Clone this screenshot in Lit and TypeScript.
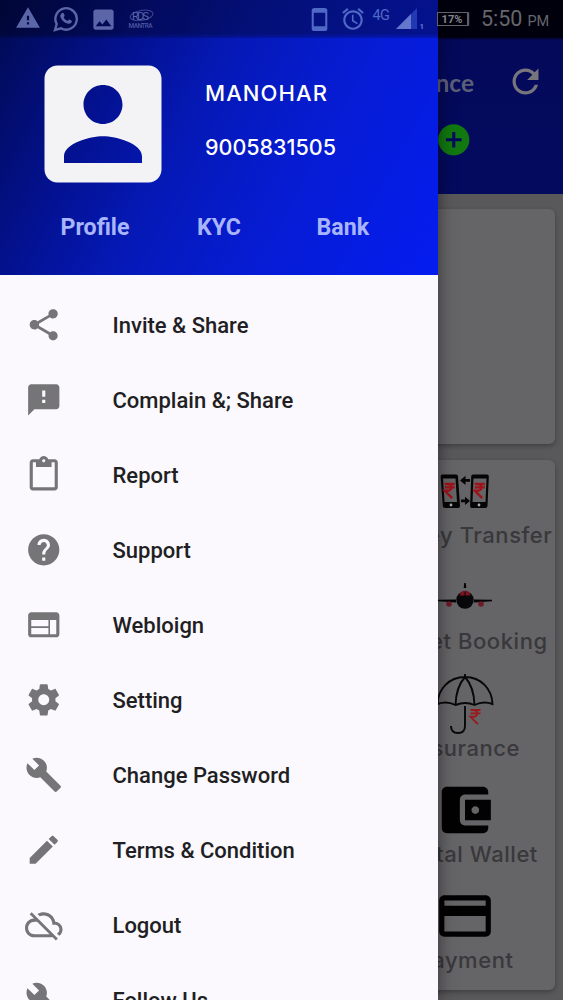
import { LitElement, html, svg, css } from "lit";
import { customElement, property } from "lit/decorators.js";

const ICONS: Record<string, string> = {
  share: "M18 16.08c-.76 0-1.44.3-1.96.77L8.91 12.7c.05-.23.09-.46.09-.7s-.04-.47-.09-.7l7.05-4.11c.54.5 1.25.81 2.04.81 1.66 0 3-1.34 3-3s-1.34-3-3-3-3 1.34-3 3c0 .24.04.47.09.7L8.04 9.81C7.5 9.31 6.79 9 6 9c-1.66 0-3 1.34-3 3s1.34 3 3 3c.79 0 1.5-.31 2.04-.81l7.12 4.16c-.05.21-.08.43-.08.65 0 1.61 1.31 2.92 2.92 2.92s2.92-1.31 2.92-2.92-1.31-2.92-2.92-2.92z",
  complain: "M20 2H4c-1.1 0-1.99.9-1.99 2L2 22l4-4h14c1.1 0 2-.9 2-2V4c0-1.1-.9-2-2-2zm-7 12h-2v-2h2v2zm0-4h-2V6h2v4z",
  report: "M19 2h-4.18C14.4.84 13.3 0 12 0c-1.3 0-2.4.84-2.82 2H5c-1.1 0-2 .9-2 2v16c0 1.1.9 2 2 2h14c1.1 0 2-.9 2-2V4c0-1.1-.9-2-2-2zm-7 0c.55 0 1 .45 1 1s-.45 1-1 1-1-.45-1-1 .45-1 1-1zm7 18H5V4h2v3h10V4h2v16z",
  help: "M12 2C6.48 2 2 6.48 2 12s4.48 10 10 10 10-4.48 10-10S17.52 2 12 2zm1 17h-2v-2h2v2zm2.07-7.75l-.9.92C13.45 12.9 13 13.5 13 15h-2v-.5c0-1.1.45-2.1 1.17-2.83l1.24-1.26c.37-.36.59-.86.59-1.41 0-1.1-.9-2-2-2s-2 .9-2 2H8c0-2.21 1.79-4 4-4s4 1.79 4 4c0 .88-.36 1.68-.93 2.25z",
  web: "M20 4H4c-1.1 0-1.99.9-1.99 2L2 18c0 1.1.9 2 2 2h16c1.1 0 2-.9 2-2V6c0-1.1-.9-2-2-2zm-5 14H4v-4h11v4zm0-5H4V9h11v4zm5 5h-4V9h4v9z",
  settings: "M19.43 12.98c.04-.32.07-.64.07-.98s-.03-.66-.07-.98l2.11-1.65c.19-.15.24-.42.12-.64l-2-3.46c-.12-.22-.39-.3-.61-.22l-2.49 1c-.52-.4-1.08-.73-1.69-.98l-.38-2.65C14.46 2.18 14.25 2 14 2h-4c-.25 0-.46.18-.49.42l-.38 2.65c-.61.25-1.17.59-1.69.98l-2.49-1c-.23-.09-.49 0-.61.22l-2 3.46c-.13.22-.07.49.12.64l2.11 1.65c-.04.32-.07.65-.07.98s.03.66.07.98l-2.11 1.65c-.19.15-.24.42-.12.64l2 3.46c.12.22.39.3.61.22l2.49-1c.52.4 1.08.73 1.69.98l.38 2.65c.03.24.24.42.49.42h4c.25 0 .46-.18.49-.42l.38-2.65c.61-.25 1.17-.59 1.69-.98l2.49 1c.23.09.49 0 .61-.22l2-3.46c.12-.22.07-.49-.12-.64l-2.11-1.65zM12 15.5c-1.93 0-3.5-1.57-3.5-3.5s1.57-3.5 3.5-3.5 3.5 1.57 3.5 3.5-1.57 3.5-3.5 3.5z",
  build: "M22.7 19l-9.1-9.1c.9-2.3.4-5-1.5-6.9-2-2-5-2.4-7.4-1.3L9 6 6 9 1.6 4.7C.4 7.1.9 10.1 2.9 12.1c1.9 1.9 4.6 2.4 6.9 1.5l9.1 9.1c.4.4 1 .4 1.4 0l2.3-2.3c.5-.4.5-1.1.1-1.4z",
  edit: "M3 17.25V21h3.75L17.81 9.94l-3.75-3.75L3 17.25zM20.71 7.04c.39-.39.39-1.02 0-1.41l-2.34-2.34c-.39-.39-1.02-.39-1.41 0l-1.83 1.83 3.75 3.75 1.83-1.83z",
  cloudOff: "M19.35 10.04C18.67 6.59 15.64 4 12 4c-1.48 0-2.85.43-4.01 1.17l1.46 1.46C10.21 6.23 11.08 6 12 6c3.04 0 5.5 2.46 5.5 5.5v.5H19c1.66 0 3 1.34 3 3 0 1.13-.64 2.11-1.56 2.62l1.45 1.45C23.16 18.16 24 16.68 24 15c0-2.64-2.05-4.78-4.65-4.96zM3 5.27l2.75 2.74C2.56 8.15 0 10.77 0 14c0 3.31 2.69 6 6 6h11.73l2 2L21 20.73 4.27 4 3 5.27zM7.73 10l8 8H6c-2.21 0-4-1.79-4-4s1.79-4 4-4h1.73z",
  accountBox: "M3 5v14c0 1.1.89 2 2 2h14c1.1 0 2-.9 2-2V5c0-1.1-.9-2-2-2H5c-1.11 0-2 .9-2 2zm12 4c0 1.66-1.34 3-3 3s-3-1.34-3-3 1.34-3 3-3 3 1.34 3 3zm-9 8c0-2 4-3.1 6-3.1s6 1.1 6 3.1v1H6v-1z",
  refresh: "M17.65 6.35C16.2 4.9 14.21 4 12 4c-4.42 0-7.99 3.58-7.99 8s3.57 8 7.99 8c3.73 0 6.84-2.55 7.73-6h-2.08c-.82 2.33-3.04 4-5.65 4-3.31 0-6-2.69-6-6s2.69-6 6-6c1.66 0 3.14.69 4.22 1.78L13 11h7V4l-2.35 2.35z",
  addCircle: "M12 2C6.48 2 2 6.48 2 12s4.48 10 10 10 10-4.48 10-10S17.52 2 12 2zm5 11h-4v4h-2v-4H7v-2h4V7h2v4h4v2z",
  wallet: "M21 18v1c0 1.1-.9 2-2 2H5c-1.11 0-2-.9-2-2V5c0-1.1.89-2 2-2h14c1.1 0 2 .9 2 2v1h-9c-1.11 0-2 .9-2 2v8c0 1.1.89 2 2 2h9zm-9-2h10V8H12v8zm4-2.5c-.83 0-1.5-.67-1.5-1.5s.67-1.5 1.5-1.5 1.5.67 1.5 1.5-.67 1.5-1.5 1.5z",
  card: "M20 4H4c-1.11 0-1.99.89-1.99 2L2 18c0 1.11.89 2 2 2h16c1.11 0 2-.89 2-2V6c0-1.11-.89-2-2-2zm0 14H4v-6h16v6zm0-10H4V6h16v2z",
  warning: "M1 21h22L12 2 1 21zm12-3h-2v-2h2v2zm0-4h-2v-4h2v4z",
  image: "M21 19V5c0-1.1-.9-2-2-2H5c-1.1 0-2 .9-2 2v14c0 1.1.9 2 2 2h14c1.1 0 2-.9 2-2zM8.5 13.5l2.5 3.01L14.5 12l4.5 6H5l3.5-4.5z",
  alarm: "M22 5.72l-4.6-3.86-1.29 1.53 4.6 3.86L22 5.72zM7.88 3.39L6.6 1.86 2 5.71l1.29 1.53 4.59-3.85zM12.5 8H11v6l4.75 2.85.75-1.23-4-2.37V8zM12 4c-4.97 0-9 4.03-9 9s4.02 9 9 9c4.97 0 9-4.03 9-9s-4.03-9-9-9zm0 16c-3.87 0-7-3.13-7-7s3.13-7 7-7 7 3.13 7 7-3.13 7-7 7z",
  phone: "M17 1H7C5.500 1 4.500 2 4.500 3v18c0 1 1 2 2.500 2h10c1.500 0 2.500-1 2.500-2V3c0-1-1-2-2.500-2zm.5 17.500h-11v-13h11v13z",
};

const RUPEE = "M0 0h10M0 3.4h10M0 0h2.8c5 0 5 6.8 0 6.8H0l7.4 7.4";

const MENU: [string, string][] = [
  ["share", "Invite & Share"],
  ["complain", "Complain &; Share"],
  ["report", "Report"],
  ["help", "Support"],
  ["web", "Webloign"],
  ["settings", "Setting"],
  ["build", "Change Password"],
  ["edit", "Terms & Condition"],
  ["cloudOff", "Logout"],
  ["build", "Follow Us"],
];

@customElement("md-icon")
class MdIcon extends LitElement {
  static styles = css`
    :host { display: block; flex: none; }
    svg { display: block; width: 100%; height: 100%; fill: currentColor; }
  `;
  @property() name = "";
  render() {
    return html`<svg viewBox="0 0 24 24"><path d=${ICONS[this.name]}></path></svg>`;
  }
}

@customElement("status-bar")
class StatusBar extends LitElement {
  static styles = css`
    :host {
      display: flex; align-items: center; height: 38px; box-sizing: border-box;
      padding: 0 12px 0 15px; color: #5b66a8; font-family: Roboto, sans-serif;
      background: linear-gradient(rgba(0, 0, 12, .38) 88%, rgba(0, 0, 12, .16));
    }
    svg { display: block; flex: none; }
    .warn { width: 26px; height: 26px; margin-top: -3px; }
    .wa { margin-left: 11.500px; }
    .img { width: 27px; height: 27px; margin-left: 11px; }
    .rds { margin-left: 10px; }
    .gap { flex: 1; }
    .phone { width: 25px; height: 25px; color: #5068c6; }
    .alarm { width: 26px; height: 26px; margin-left: 8px; color: #5068c6; }
    .net { margin-left: 7px; width: 18px; height: 24px; font-size: 14.500px; line-height: 17px; color: #5068c6; letter-spacing: -.6px; }
    .sig { margin-left: 4px; }
    .batt {
      margin-left: 12px; width: 29px; height: 12px; border: 1.500px solid #606066; color: #85858a;
      font: 700 11px/13px Roboto, sans-serif; text-align: center; box-shadow: 1.500px 0 0 -0.300px #606066;
    }
    .time { margin-left: 13.500px; width: 70px; font-size: 21.500px; line-height: 38px; margin-top: 3px; color: #66666b; white-space: nowrap; }
    .pm { font-size: 14.500px; margin-left: 5px; }
  `;
  render() {
    return html`
      <md-icon class="warn" name="warning"></md-icon>
      <svg class="wa" width="26" height="26" viewBox="0 0 26 26">
        <path d="M2 24l1.700-6A10.700 10.700 0 1 1 8 22.300z" fill="none" stroke="#5b66a8" stroke-width="2.400"></path>
        <path d="M9.200 7c.6-.3 1.300-.2 1.600.5l.8 1.900c.2.600-.8 1.400-1 1.800.8 1.700 2.100 2.900 4 3.700.5-.3 1.200-1.600 1.800-1.400l2.200 1.200c.5.300.1 1.500-.3 2-1.400 1.500-3.600 1.100-5.300.4-2.600-1.200-4.400-3.300-5.400-5.500C6.900 9.700 7.500 7.900 9.200 7z" fill="#5b66a8"></path>
      </svg>
      <md-icon class="img" name="image"></md-icon>
      <svg class="rds" width="28" height="22" viewBox="0 0 28 22">
        <ellipse cx="14.500" cy="7.500" rx="11.500" ry="5" transform="rotate(-10 14 7)" fill="none" stroke="#3b468f" stroke-width="1"></ellipse>
        <text x="5" y="11.500" font-family="Roboto, sans-serif" font-size="11" textLength="17" fill="#5b66a8">RDS</text>
        <text x="1.500" y="20" font-family="Roboto, sans-serif" font-size="6.500" font-weight="500" textLength="24" fill="#4d58a0">MANTRA</text>
      </svg>
      <span class="gap"></span>
      <md-icon class="phone" name="phone"></md-icon>
      <md-icon class="alarm" name="alarm"></md-icon>
      <span class="net">4G</span>
      <svg class="sig" width="30" height="24" viewBox="0 0 30 24">
        <path d="M22 1v21H1z" fill="#2339b3"></path>
        <path d="M16 7v15H1z" fill="#6577cc"></path>
        <text x="24.500" y="22" font-family="Roboto, sans-serif" font-size="8" font-weight="700" fill="#6577cc">1</text>
      </svg>
      <span class="batt">17%</span>
      <span class="time">5:50<span class="pm">PM</span></span>
    `;
  }
}

@customElement("app-root")
class AppRoot extends LitElement {
  static styles = css`
    :host { display: block; position: relative; width: 563px; height: 1000px; overflow: hidden; background: #59585b; font-family: Roboto, sans-serif; }
    .page { display: flex; flex-direction: column; height: 1000px; }
    .appbar {
      height: 194px; box-sizing: border-box; padding: 62px 18px 0 0; flex: none;
      background: linear-gradient(#00000d 37px, #04095a 40px, #040a5e);
    }
    .row { display: flex; justify-content: flex-end; align-items: center; height: 38px; }
    .balance { font: 700 24.500px/38px Lato, sans-serif; color: #5d5f78; margin: 4px 32px 0 0; }
    .refresh { width: 39px; height: 39px; color: #77767d; }
    .second { margin-top: 21px; padding-right: 73px; }
    .add { width: 37.500px; height: 37.500px; color: #11790f; }
    .card { margin: 0 8px; border-radius: 6px; background: #656467; box-shadow: 0 2px 5px rgba(0, 0, 0, .3); flex: none; }
    .banner { margin-top: 15px; height: 235px; }
    .services { margin-top: 16px; height: 530px; display: grid; grid-template-columns: repeat(3, 1fr); }
    .column { grid-column: 3; display: flex; flex-direction: column; padding-left: 2.500px; }
    .cell { height: 106.300px; display: flex; flex-direction: column; align-items: center; }
    .art { height: 60px; display: flex; align-items: center; margin-top: 1px; color: #020203; }
    .art svg { display: block; }
    .big { width: 62px; height: 62px; }
    .name { font: 500 22px/28px Inter, sans-serif; color: #39383b; white-space: nowrap; letter-spacing: .55px; margin-right: -1px; }

    .drawer {
      position: absolute; left: 0; top: 0; width: 438px; height: 1000px;
      display: flex; flex-direction: column; background: #fbf9fd; box-shadow: 0 0 16px rgba(0, 0, 0, .5);
    }
    .head {
      height: 275px; flex: none; box-sizing: border-box; padding-top: 46px;
      background: linear-gradient(118deg, #010a50 0%, #03118e 25%, #0519b8 45%, #061cd4 68%, #041cf0 100%);
    }
    .user { display: flex; height: 156px; }
    .avatar { width: 156px; height: 156px; margin-left: 25px; color: #f3f2f5; }
    .who { margin-left: 24px; padding-top: 33px; color: #fff; font: 500 21.500px/28px Inter, sans-serif; }
    .phone { margin-top: 26px; }
    .user .nm { font-size: 22px; letter-spacing: 1.100px; }
    .tabs { display: flex; margin-top: 9px; padding-left: 60.500px; font: 700 23.200px/32px Roboto, sans-serif; color: #a9b5fb; }
    .tab1 { width: 136.500px; }
    .tab2 { width: 119.500px; }
    .menu { padding-top: 12.500px; }
    .item { height: 75px; display: flex; align-items: center; padding-left: 25px; font-weight: 500; font-size: 22px; color: #202023; }
    .ic { width: 37.500px; height: 37.500px; color: #757477; margin-right: 50px; }
    .status { position: absolute; left: 0; top: 0; width: 563px; }
  `;

  private art(kind: string) {
    if (kind === "wallet" || kind === "card") return html`<md-icon class="big" name=${kind}></md-icon>`;
    if (kind === "transfer")
      return html`<svg width="50" height="36" viewBox="0 0 50 36">
        ${[[0, 0], [30, 0]].map(([x], i) => svg`
          <g transform="translate(${x} 0)">
            <path d=${i ? "M3 1.500h14q2 0 1.800 2L17.500 33q-.2 2-2.200 2H2Q0 35 .1 33L1.200 3.500q.1-2 1.800-2z" : "M2.500 1.500h13.500q2 0 2 2L20 33q0 2-2 2H5q-2 0-2.200-2L.6 3.500q-.1-2 1.900-2z"} fill="#050506"></path>
            <path d=${i ? "M3.500 5.500h13L15.500 29H2.500z" : "M3 5.500h12.500L17 29H4.500z"} fill="#656467"></path>
            <circle cx=${i ? 9 : 11} cy="32" r="1.400" fill="#aaa"></circle>
            <path d=${RUPEE} transform="translate(4.800 11)" fill="none" stroke="#a01218" stroke-width="2.400"></path>
          </g>`)}
        <path d="M20 7.500l5.500-4.800v3.300h4.500v2.800h-4.500v3.300zM30 28l-5-4.200v2.700h-4v2.800h4v2.700z" fill="#050506"></path>
      </svg>`;
    if (kind === "plane")
      return html`<svg width="54" height="28" viewBox="0 0 54 28">
        <path d="M26.200 0h1.600l.5 5h-2.600z" fill="#050506"></path>
        <path d="M0 16.800l18-.3v3L0 18.200zM54 16.800l-18-.3v3L54 18.200z" fill="#050506"></path>
        <circle cx="11" cy="21" r="2.800" fill="#6e1a26"></circle><circle cx="43" cy="21" r="2.800" fill="#6e1a26"></circle>
        <circle cx="27" cy="17" r="8.700" fill="#08080a"></circle>
        <path d="M21.500 12.500q1-4.500 5-5v5zM32.500 12.500q-1-4.500-5-5v5z" fill="#7a1420"></path>
      </svg>`;
    return html`<svg width="58" height="62" viewBox="0 0 58 62">
      <g fill="none" stroke="#08080a" stroke-width="1.900">
        <path d="M29 1v4M1.500 31C2 16 13 4 29 4s27 12 27.500 27q-9-3.500-18 1-9-4-19 0-9-4.500-18-1z"></path>
        <path d="M29 4q-9 10-9.500 28M29 4q9 10 9.500 28M29 33v20q0 7-7 7t-7-7"></path>
      </g>
      <path d=${RUPEE} transform="translate(34.500 37)" fill="none" stroke="#9a1a1c" stroke-width="1.900"></path>
    </svg>`;
  }

  render() {
    const services = [
      ["transfer", "Money Transfer"],
      ["plane", "Ticket Booking"],
      ["umbrella", "Insurance"],
      ["wallet", "Digital Wallet"],
      ["card", "Payment"],
    ];
    return html`
      <div class="page">
        <header class="appbar">
          <div class="row"><span class="balance">Balance</span><md-icon class="refresh" name="refresh"></md-icon></div>
          <div class="row second"><md-icon class="add" name="addCircle"></md-icon></div>
        </header>
        <div class="card banner"></div>
        <div class="card services">
          <div class="column">
            ${services.map(([k, n]) => html`<div class="cell"><div class="art">${this.art(k)}</div><span class="name">${n}</span></div>`)}
          </div>
        </div>
      </div>
      <aside class="drawer">
        <div class="head">
          <div class="user">
            <md-icon class="avatar" name="accountBox"></md-icon>
            <div class="who"><div class="nm">MANOHAR</div><div class="phone">9005831505</div></div>
          </div>
          <nav class="tabs"><span class="tab1">Profile</span><span class="tab2">KYC</span><span>Bank</span></nav>
        </div>
        <nav class="menu">
          ${MENU.map(([i, t]) => html`<div class="item"><md-icon class="ic" name=${i}></md-icon><span>${t}</span></div>`)}
        </nav>
      </aside>
      <status-bar class="status"></status-bar>
    `;
  }
}
